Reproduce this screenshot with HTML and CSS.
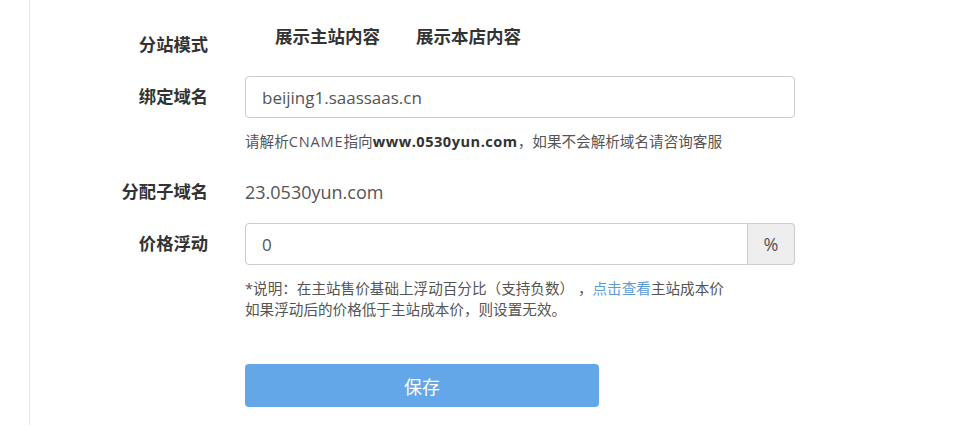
FILE: index.html
```html
<!DOCTYPE html>
<html lang="zh-CN">
<head>
  <meta charset="UTF-8">
  <title>分站设置</title>
  <link rel="stylesheet" href="styles.css">
</head>
<body>
<div class="panel">
  <div class="form">

    <div class="row row-mode">
      <div class="label">分站模式</div>
      <div class="control">
        <div class="modes">
          <span class="mode">展示主站内容</span>
          <span class="mode">展示本店内容</span>
        </div>
      </div>
    </div>

    <div class="row">
      <div class="label">绑定域名</div>
      <div class="control">
        <input class="input" type="text" value="beijing1.saassaas.cn">
        <div class="help">请解析<span class="latin">CNAME</span>指向<b>www.0530yun.com</b>，如果不会解析域名请咨询客服</div>
      </div>
    </div>

    <div class="row">
      <div class="label">分配子域名</div>
      <div class="control">
        <div class="static">23.0530yun.com</div>
      </div>
    </div>

    <div class="row">
      <div class="label">价格浮动</div>
      <div class="control">
        <div class="input-group">
          <input class="input" type="text" value="0">
          <span class="addon">%</span>
        </div>
        <div class="help note">
          *说明：在主站售价基础上浮动百分比（支持负数）&nbsp;，<a href="#" class="link">点击查看</a>主站成本价<br>
          如果浮动后的价格低于主站成本价，则设置无效。
        </div>
      </div>
    </div>

    <div class="row">
      <div class="label"></div>
      <div class="control">
        <button class="btn-save" type="button">保存</button>
      </div>
    </div>

  </div>
</div>
</body>
</html>
```

FILE: styles.css
```css
html, body {
  margin: 0;
  padding: 0;
  background: #fff;
}
body {
  font-family: "Open Sans", "Noto Sans CJK SC", sans-serif;
  color: #555;
  font-size: 14px;
}

.panel {
  margin-left: 29px;
  height: 425px;
  border-left: 1px solid #e6e6e6;
  padding-top: 24px;
  box-sizing: border-box;
}

.form {
  width: 766px;
}

.row {
  display: flex;
  margin-bottom: 10px;
}
.label {
  width: 178px;
  flex: none;
  text-align: right;
  font-size: 17.3px;
  font-weight: bold;
  color: #333;
  line-height: 42px;
  height: 42px;
  margin-right: 37px;
}
.control {
  width: 550px;
}

.modes {
  display: flex;
}
.mode {
  font-size: 17.5px;
  font-weight: bold;
  color: #333;
  line-height: 24px;
  margin-left: 30px;
}
.mode + .mode {
  margin-left: 36px;
}

.input {
  display: block;
  width: 100%;
  height: 42px;
  box-sizing: border-box;
  border: 1px solid #ccc;
  border-radius: 4px;
  padding: 0 16px;
  font-family: inherit;
  font-size: 17px;
  color: #555;
  outline: none;
}

.input-group {
  display: flex;
}
.input-group .input {
  flex: 1;
  border-top-right-radius: 0;
  border-bottom-right-radius: 0;
}
.addon {
  width: 47px;
  flex: none;
  height: 42px;
  box-sizing: border-box;
  border: 1px solid #ccc;
  border-left: none;
  border-radius: 0 4px 4px 0;
  background: #eee;
  text-align: center;
  line-height: 40px;
  font-size: 18px;
  color: #555;
}

.help {
  margin-top: 13px;
  margin-bottom: 10px;
  font-size: 14.6px;
  line-height: 20px;
  color: #555;
}
.help b {
  color: #333;
  letter-spacing: 0.5px;
}
.latin {
  letter-spacing: 0.8px;
}
.note {
  line-height: 21px;
  margin-bottom: 34px;
}
.link {
  color: #5b9bd8;
  text-decoration: none;
}

.static {
  line-height: 42px;
  font-size: 18px;
  color: #555;
}

.btn-save {
  width: 354px;
  height: 43px;
  border: none;
  border-radius: 4px;
  background: #63a7e9;
  color: #fff;
  font-family: inherit;
  font-size: 18px;
  cursor: pointer;
}
```
